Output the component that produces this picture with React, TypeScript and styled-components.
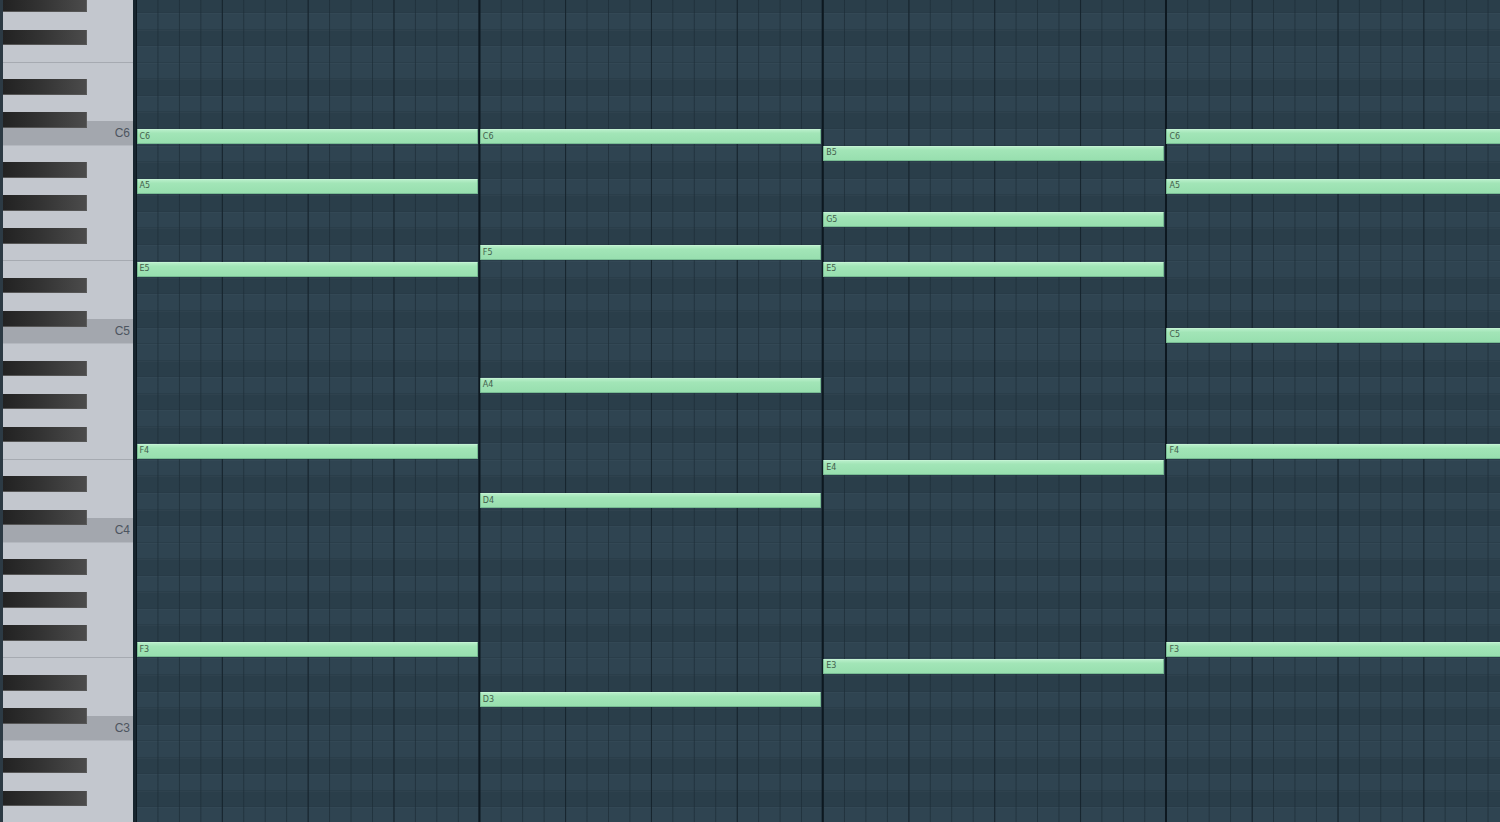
import React from "react";
import styled, { createGlobalStyle } from "styled-components";

const ROW = 16.55;
const BAR = 343.33;
const TOP_MIDI = 92; // G#6
const ROW_COUNT = 50;
const FIRST_ROW_TOP = -3.4;

const PCS: Record<string, number> = { C: 0, "C#": 1, D: 2, "D#": 3, E: 4, F: 5, "F#": 6, G: 7, "G#": 8, A: 9, "A#": 10, B: 11 };
const BLACK = new Set([1, 3, 6, 8, 10]);
const WHITE_SIZE: Record<number, number> = { 0: 1.5, 2: 2, 4: 1.5, 5: 1.5, 7: 2, 9: 2, 11: 1.5 };

const midiOf = (name: string) => {
  const m = name.match(/^([A-G]#?)(\d)$/)!;
  return 12 * (parseInt(m[2], 10) + 1) + PCS[m[1]];
};

const NOTES: [number, string][] = [
  [0, "C6"], [0, "A5"], [0, "E5"], [0, "F4"], [0, "F3"],
  [1, "C6"], [1, "F5"], [1, "A4"], [1, "D4"], [1, "D3"],
  [2, "B5"], [2, "G5"], [2, "E5"], [2, "E4"], [2, "E3"],
  [3, "C6"], [3, "A5"], [3, "C5"], [3, "F4"], [3, "F3"],
];

const Global = createGlobalStyle`
  html, body { margin: 0; padding: 0; background: #2e4350; overflow: hidden; }
  * { box-sizing: border-box; }
`;

const Editor = styled.div`
  display: flex;
  width: 1500px;
  height: 822px;
  overflow: hidden;
  font-family: "Liberation Sans", Arial, sans-serif;
`;

const Keyboard = styled.div`
  position: relative;
  flex: 0 0 136px;
  height: 100%;
  overflow: hidden;
  background: #c3c7ce;
  border-left: 3px solid #2c3a44;
  border-right: 3px solid #17252e;
`;

const WhiteColumn = styled.div`
  display: flex;
  flex-direction: column;
  margin-top: ${-36.5 + ROW / 2}px;
`;

const WhiteKey = styled.div<{ $h: number; $c: boolean; $f: boolean }>`
  flex: 0 0 ${(p) => p.$h}px;
  display: flex;
  align-items: center;
  justify-content: flex-end;
  padding-right: 3px;
  background: ${(p) => (p.$c ? "#a3a7ae" : "#c3c7ce")};
  border-bottom: ${(p) => (p.$c ? "1px solid #b4b8bf" : p.$f ? "1px solid #a6aab1" : "none")};
  color: #4d5560;
  font-size: 12px;
`;

const BlackLayer = styled.div`
  position: absolute;
  inset: 0;
  display: flex;
  flex-direction: column;
  margin-top: ${FIRST_ROW_TOP}px;
`;

const KeyRow = styled.div`
  flex: 0 0 ${ROW}px;
  display: flex;
  align-items: flex-start;
`;

const BlackKey = styled.div`
  width: 84px;
  height: ${ROW - 1}px;
  background: linear-gradient(to right, #222 0%, #333 45%, #4b4b4b 100%);
  border-right: 1px solid #5c5c5c;
  border-bottom: 1px solid #555;
`;

const Grid = styled.div`
  position: relative;
  flex: 1 1 auto;
  height: 100%;
  overflow: hidden;
`;

const Rows = styled.div`
  display: flex;
  flex-direction: column;
  margin-top: ${FIRST_ROW_TOP}px;
`;

const GridRow = styled.div<{ $black: boolean }>`
  flex: 0 0 ${ROW}px;
  background: ${(p) => (p.$black ? "#2a3e4a" : "#2f4451")};
  border-bottom: 1px solid #25384380;
  box-shadow: inset 0 1px 0 rgba(255, 255, 255, 0.025);
`;

const Lines = styled.div`
  position: absolute;
  inset: 0;
  pointer-events: none;
  background-image:
    linear-gradient(90deg, #0d1820 0, #0d1820 2px, transparent 2px),
    linear-gradient(90deg, rgba(20, 33, 42, 0.85) 0, rgba(20, 33, 42, 0.85) 1px, transparent 1px),
    linear-gradient(90deg, rgba(28, 44, 54, 0.7) 0, rgba(28, 44, 54, 0.7) 1px, transparent 1px);
  background-size: ${BAR}px 100%, ${BAR / 4}px 100%, ${BAR / 16}px 100%;
  background-position: -1px 0, 0 0, 0 0;
  background-repeat: repeat-x;
`;

const NoteLayer = styled.div`
  position: absolute;
  inset: 0;
`;

const Note = styled.div`
  position: absolute;
  height: 15px;
  display: flex;
  align-items: center;
  padding-left: 2px;
  background: linear-gradient(#b6eec8 0, #a2e5b7 25%, #98dfaf 100%);
  border: 1px solid #78bb93;
  border-top-color: #c4f3d3;
  border-radius: 1px;
  color: #445f4d;
  font-family: "DejaVu Sans", "Liberation Sans", sans-serif;
  font-size: 8px;
  line-height: 1;
  overflow: hidden;
`;

export default function App() {
  const rows = Array.from({ length: ROW_COUNT }, (_, i) => TOP_MIDI - i);

  const whiteKeys: { midi: number; h: number }[] = [];
  for (let m = 93; m >= 43; m--) {
    const pc = m % 12;
    if (!BLACK.has(pc)) whiteKeys.push({ midi: m, h: WHITE_SIZE[pc] * ROW });
  }

  return (
    <>
      <Global />
      <Editor>
        <Keyboard>
          <WhiteColumn>
            {whiteKeys.map(({ midi, h }) => {
              const pc = midi % 12;
              const isC = pc === 0;
              return (
                <WhiteKey key={midi} $h={h} $c={isC} $f={pc === 5}>
                  {isC ? `C${Math.floor(midi / 12) - 1}` : null}
                </WhiteKey>
              );
            })}
          </WhiteColumn>
          <BlackLayer>
            {rows.map((m) => (
              <KeyRow key={m}>{BLACK.has(m % 12) ? <BlackKey /> : null}</KeyRow>
            ))}
          </BlackLayer>
        </Keyboard>
        <Grid>
          <Rows>
            {rows.map((m) => (
              <GridRow key={m} $black={BLACK.has(m % 12)} />
            ))}
          </Rows>
          <Lines />
          <NoteLayer>
            {NOTES.map(([bar, name], i) => {
              const idx = TOP_MIDI - midiOf(name);
              const top = FIRST_ROW_TOP + idx * ROW + 0.3;
              return (
                <Note
                  key={i}
                  style={{ top: `${top}px`, left: `${bar * BAR + 0.5}px`, width: `${BAR - 2}px` }}
                >
                  {name}
                </Note>
              );
            })}
          </NoteLayer>
        </Grid>
      </Editor>
    </>
  );
}
